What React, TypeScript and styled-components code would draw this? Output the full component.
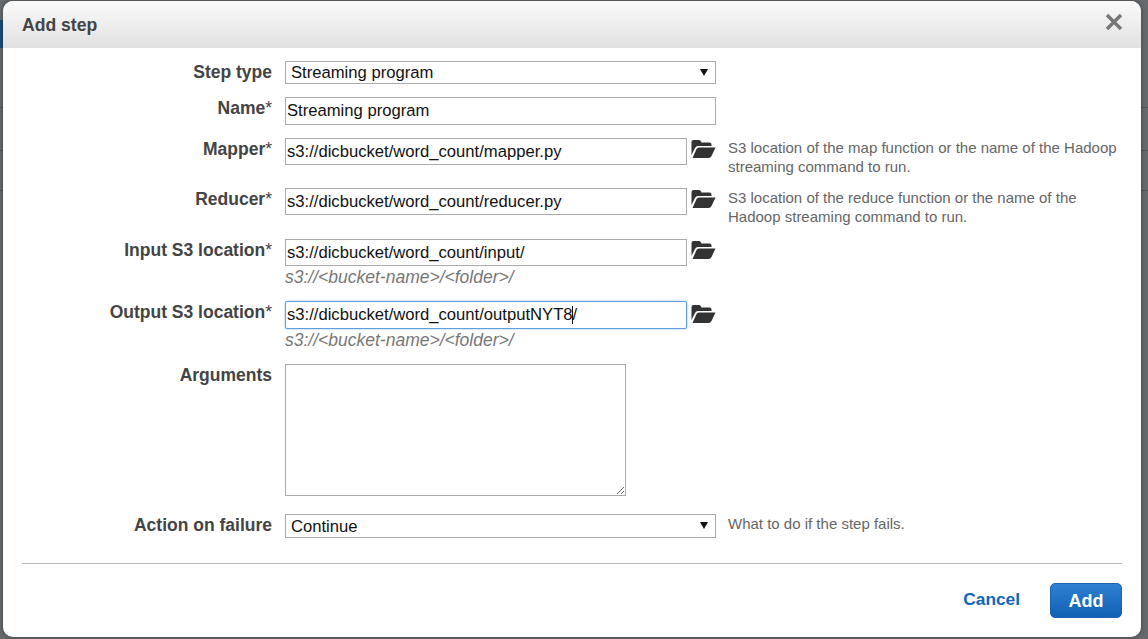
import React from "react";
import styled, { createGlobalStyle } from "styled-components";

const Global = createGlobalStyle`
  html, body { margin: 0; padding: 0; height: 100%; }
  body { font-family: "Liberation Sans", Arial, sans-serif; background: #666a6d; overflow: hidden; }
  * { box-sizing: border-box; }
`;

const Page = styled.div`
  width: 1148px;
  height: 639px;
  padding: 1px 7px 2px 3px;
  background:
    linear-gradient(#1f4d78, #1f4d78) 0 20px / 3px 28px no-repeat,
    linear-gradient(#54575a, #54575a) 0 107px / 100% 1px no-repeat,
    linear-gradient(#54575a, #54575a) 0 150px / 100% 1px no-repeat,
    linear-gradient(#54575a, #54575a) 0 190px / 100% 1px no-repeat,
    #666a6d;
`;

const Dialog = styled.div`
  width: 1138px;
  height: 636px;
  background: #fff;
  border-radius: 10px;
  box-shadow: 0 0 5px rgba(0, 0, 0, 0.4);
  overflow: hidden;
  display: flex;
  flex-direction: column;
`;

const Header = styled.div`
  height: 47px;
  flex: none;
  display: flex;
  align-items: center;
  justify-content: space-between;
  padding: 0 18px 0 19px;
  background: linear-gradient(#fafafa, #e1e1e1);
`;

const Title = styled.h1`
  margin: 2px 0 0;
  font-size: 17.6px;
  font-weight: 700;
  color: #444;
`;

const CloseIcon = styled.svg`
  width: 18px;
  height: 18px;
  margin-top: -5px;
  display: block;
`;

const Form = styled.div`
  flex: 1;
  padding: 13px 19px 0;
`;

const Row = styled.div<{ $mb: number }>`
  display: grid;
  grid-template-columns: 250px 431px 1fr;
  column-gap: 12px;
  margin-bottom: ${(p) => p.$mb}px;
`;

const Label = styled.label`
  text-align: right;
  font-size: 17.5px;
  font-weight: 700;
  line-height: 20px;
  color: #444;
  padding-top: 1px;
`;

const Required = styled.span`
  font-weight: 400;
`;

const Control = styled.div`
  position: relative;
  margin-left: 1px;
  width: 431px;
`;

const SelectBox = styled.select<{ $h: number }>`
  appearance: none;
  display: block;
  width: 431px;
  height: ${(p) => p.$h}px;
  padding: 0 0 0 5px;
  border: 1px solid #aaa;
  border-radius: 0;
  background: #fff;
  font: 16.64px "Liberation Sans", Arial, sans-serif;
  color: #111;
`;

const Arrow = styled.svg`
  position: absolute;
  right: 8px;
  top: 8px;
  width: 8px;
  height: 7px;
`;

const TextField = styled.input<{ $h: number; $w: number; $focus?: boolean }>`
  display: block;
  width: ${(p) => p.$w}px;
  height: ${(p) => p.$h}px;
  padding: 0 1px;
  border: 1px solid ${(p) => (p.$focus ? "#5f9fdf" : "#aaa")};
  border-radius: ${(p) => (p.$focus ? "2px" : "0")};
  box-shadow: ${(p) => (p.$focus ? "0 0 2px #7ab0e6" : "none")};
  font: 16.64px "Liberation Sans", Arial, sans-serif;
  color: #111;
  outline: none;
  background: #fff;
`;

const Caret = styled.span`
  position: absolute;
  left: 287px;
  top: 5px;
  width: 1px;
  height: 18px;
  background: #111;
`;

const FieldLine = styled.div`
  display: flex;
  align-items: flex-start;
  gap: 4px;
`;

const FolderIcon = styled.svg<{ $top: number }>`
  width: 25px;
  height: 20px;
  flex: none;
  margin-top: ${(p) => p.$top}px;
`;

const Hint = styled.div`
  font-size: 17.5px;
  font-style: italic;
  line-height: 20px;
  color: #777;
  margin-top: 1px;
`;

const Help = styled.div`
  font-size: 15px;
  line-height: 19px;
  color: #666;
  padding-left: 1px;
  white-space: pre-line;
`;

const Area = styled.textarea`
  display: block;
  width: 341px;
  height: 132px;
  border: 1px solid #aaa;
  border-radius: 0;
  background: #fff;
  outline: none;
`;

const Divider = styled.hr`
  margin: 0;
  height: 1px;
  border: 0;
  background: #bbb;
`;

const Footer = styled.div`
  display: flex;
  justify-content: flex-end;
  align-items: center;
  gap: 30px;
  padding-top: 19px;
`;

const CancelLink = styled.a`
  font-size: 17.3px;
  font-weight: 700;
  color: #1166bb;
  margin-top: -3px;
`;

const AddButton = styled.button`
  width: 72px;
  height: 35px;
  padding: 2px 0 0;
  border: 1px solid #1a62ad;
  border-radius: 5px;
  background: linear-gradient(#2f7fd2, #1060b4);
  color: #fff;
  font: 700 18px "Liberation Sans", Arial, sans-serif;
`;

const Folder = ({ top = 1 }: { top?: number }) => (
  <FolderIcon $top={top} viewBox="0 0 25 20" aria-hidden>
    <path
      d="M0.5 3 Q0.5 1 2.5 1 H8 Q9.5 1 10 2.5 L10.5 3.5 H18.5 Q20.5 3.5 20.5 5.5 V7 H7 Q5 7 4 9 L0.5 16 Z"
      fill="#333"
    />
    <path d="M1.5 19 L5.5 10 Q6.3 8.5 8 8.5 H24.5 L20.5 17 Q19.5 19 17.5 19 Z" fill="#333" />
  </FolderIcon>
);

const Select = ({ value, height = 23 }: { value: string; height?: number }) => (
  <Control>
    <SelectBox $h={height} defaultValue={value}>
      <option>{value}</option>
    </SelectBox>
    <Arrow viewBox="0 0 8 7" aria-hidden>
      <path d="M0 0 H8 L4 7 Z" fill="#111" />
    </Arrow>
  </Control>
);

export default function App() {
  return (
    <Page>
      <Global />
      <Dialog>
        <Header>
          <Title>Add step</Title>
          <CloseIcon viewBox="0 0 18 18" aria-hidden>
            <path d="M2 2 L16 16 M16 2 L2 16" stroke="#777" strokeWidth="3.4" fill="none" />
          </CloseIcon>
        </Header>
        <Form>
          <Row $mb={13}>
            <Label>Step type</Label>
            <Select value="Streaming program" />
          </Row>
          <Row $mb={13}>
            <Label>Name<Required>*</Required></Label>
            <Control>
              <TextField $w={431} $h={28} defaultValue="Streaming program" />
            </Control>
          </Row>
          <Row $mb={12}>
            <Label>Mapper<Required>*</Required></Label>
            <Control>
              <FieldLine>
                <TextField $w={402} $h={27} defaultValue="s3://dicbucket/word_count/mapper.py" />
                <Folder />
              </FieldLine>
            </Control>
            <Help>{"S3 location of the map function or the name of the Hadoop\nstreaming command to run."}</Help>
          </Row>
          <Row $mb={13}>
            <Label>Reducer<Required>*</Required></Label>
            <Control>
              <FieldLine>
                <TextField $w={402} $h={27} defaultValue="s3://dicbucket/word_count/reducer.py" />
                <Folder />
              </FieldLine>
            </Control>
            <Help>{"S3 location of the reduce function or the name of the\nHadoop streaming command to run."}</Help>
          </Row>
          <Row $mb={14}>
            <Label>Input S3 location<Required>*</Required></Label>
            <Control>
              <FieldLine>
                <TextField $w={402} $h={27} defaultValue="s3://dicbucket/word_count/input/" />
                <Folder />
              </FieldLine>
              <Hint>s3://&lt;bucket-name&gt;/&lt;folder&gt;/</Hint>
            </Control>
          </Row>
          <Row $mb={14}>
            <Label>Output S3 location<Required>*</Required></Label>
            <Control>
              <FieldLine>
                <TextField $w={402} $h={28} $focus defaultValue="s3://dicbucket/word_count/outputNYT8/" />
                <Folder top={3} />
              </FieldLine>
              <Caret />
              <Hint>s3://&lt;bucket-name&gt;/&lt;folder&gt;/</Hint>
            </Control>
          </Row>
          <Row $mb={18}>
            <Label>Arguments</Label>
            <Control>
              <Area />
            </Control>
          </Row>
          <Row $mb={25}>
            <Label>Action on failure</Label>
            <Select value="Continue" height={24} />
            <Help>What to do if the step fails.</Help>
          </Row>
          <Divider />
          <Footer>
            <CancelLink>Cancel</CancelLink>
            <AddButton>Add</AddButton>
          </Footer>
        </Form>
      </Dialog>
    </Page>
  );
}
